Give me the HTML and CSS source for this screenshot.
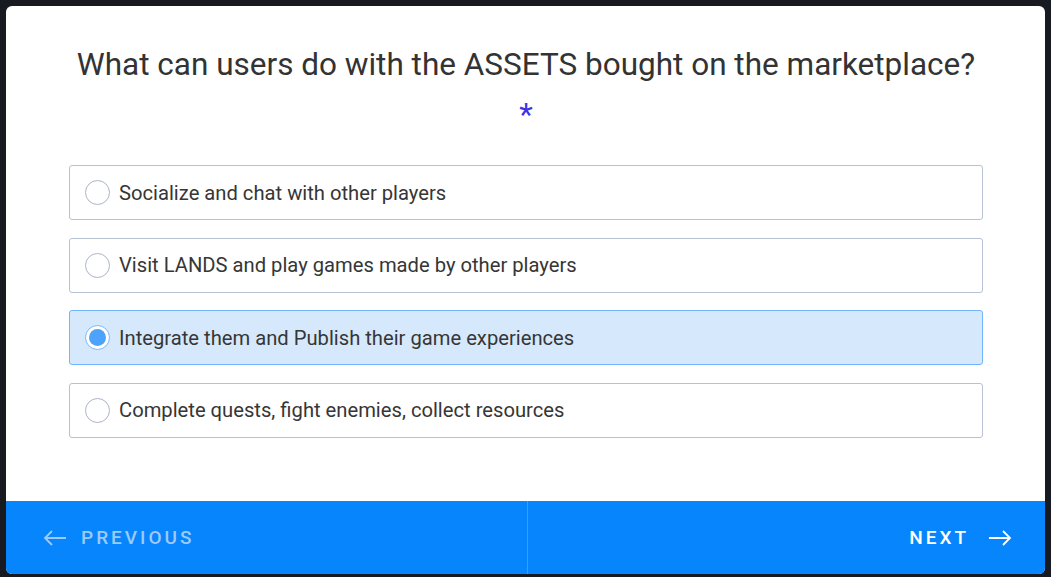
FILE: index.html
```html
<!DOCTYPE html>
<html>
<head>
<meta charset="utf-8">
<link rel="stylesheet" href="styles.css">
</head>
<body>
<div class="card">
  <div class="content">
    <h1 class="question">What can users do with the ASSETS bought on the marketplace?</h1>
    <div class="req">*</div>
    <div class="options">
      <label class="option"><span class="radio"></span><span class="label">Socialize and chat with other players</span></label>
      <label class="option"><span class="radio"></span><span class="label">Visit LANDS and play games made by other players</span></label>
      <label class="option selected"><span class="radio"><span class="dot"></span></span><span class="label">Integrate them and Publish their game experiences</span></label>
      <label class="option"><span class="radio"></span><span class="label">Complete quests, fight enemies, collect resources</span></label>
    </div>
  </div>
  <div class="footer">
    <div class="nav prev">
      <svg width="24" height="16" viewBox="0 0 24 16"><path d="M23 8H2M9 1L2 8l7 7" fill="none" stroke="currentColor" stroke-width="1.8"/></svg>
      <span>PREVIOUS</span>
    </div>
    <div class="nav next">
      <span>NEXT</span>
      <svg width="24" height="16" viewBox="0 0 24 16"><path d="M1 8h21M15 1l7 7-7 7" fill="none" stroke="currentColor" stroke-width="1.8"/></svg>
    </div>
  </div>
</div>
</body>
</html>
```

FILE: styles.css
```css
html, body {
  margin: 0;
  padding: 0;
  background: #181a21;
}
body {
  padding: 6px 6px 3px 6px;
  font-family: Roboto, "Liberation Sans", sans-serif;
}
.card {
  width: 1039px;
  height: 568px;
  background: #fff;
  border-radius: 6px;
  overflow: hidden;
  display: flex;
  flex-direction: column;
}
.content {
  flex: 1;
  padding: 35px 62px 0 63px;
}
.question {
  margin: 0;
  text-align: center;
  font-weight: 400;
  font-size: 31.5px;
  line-height: 47px;
  color: #333;
}
.req {
  margin-top: 3px;
  text-align: center;
  color: #3b35e6;
  font-size: 31.5px;
  line-height: 47px;
}
.options {
  margin-top: 27px;
  display: flex;
  flex-direction: column;
  gap: 17.5px;
}
.option {
  box-sizing: border-box;
  display: flex;
  align-items: center;
  height: 55px;
  border: 1px solid #b8c0d4;
  border-radius: 3px;
  padding-left: 15px;
  background: #fff;
}
.option.selected {
  background: #d6e9fc;
  border-color: #72b5fb;
}
.radio {
  width: 23px;
  height: 23px;
  border: 1px solid #adb4c7;
  border-radius: 50%;
  background: #fff;
  display: flex;
  align-items: center;
  justify-content: center;
  flex: none;
}
.selected .radio {
  border-color: #7ab8f7;
}
.dot {
  width: 17px;
  height: 17px;
  border-radius: 50%;
  background: #4da3fb;
}
.label {
  margin-left: 9px;
  font-size: 20.2px;
  color: #363636;
}
.footer {
  height: 73px;
  background: #0785fd;
  display: flex;
}
.nav {
  flex: 1;
  display: flex;
  align-items: center;
  gap: 14px;
  font-size: 19px;
  font-weight: 500;
  letter-spacing: 3px;
}
.prev {
  color: #9ccafb;
  padding-left: 37px;
  border-right: 1px solid #3c9cf8;
}
.next {
  color: #fff;
  justify-content: flex-end;
  padding-right: 33px;
  gap: 19px;
}
```
